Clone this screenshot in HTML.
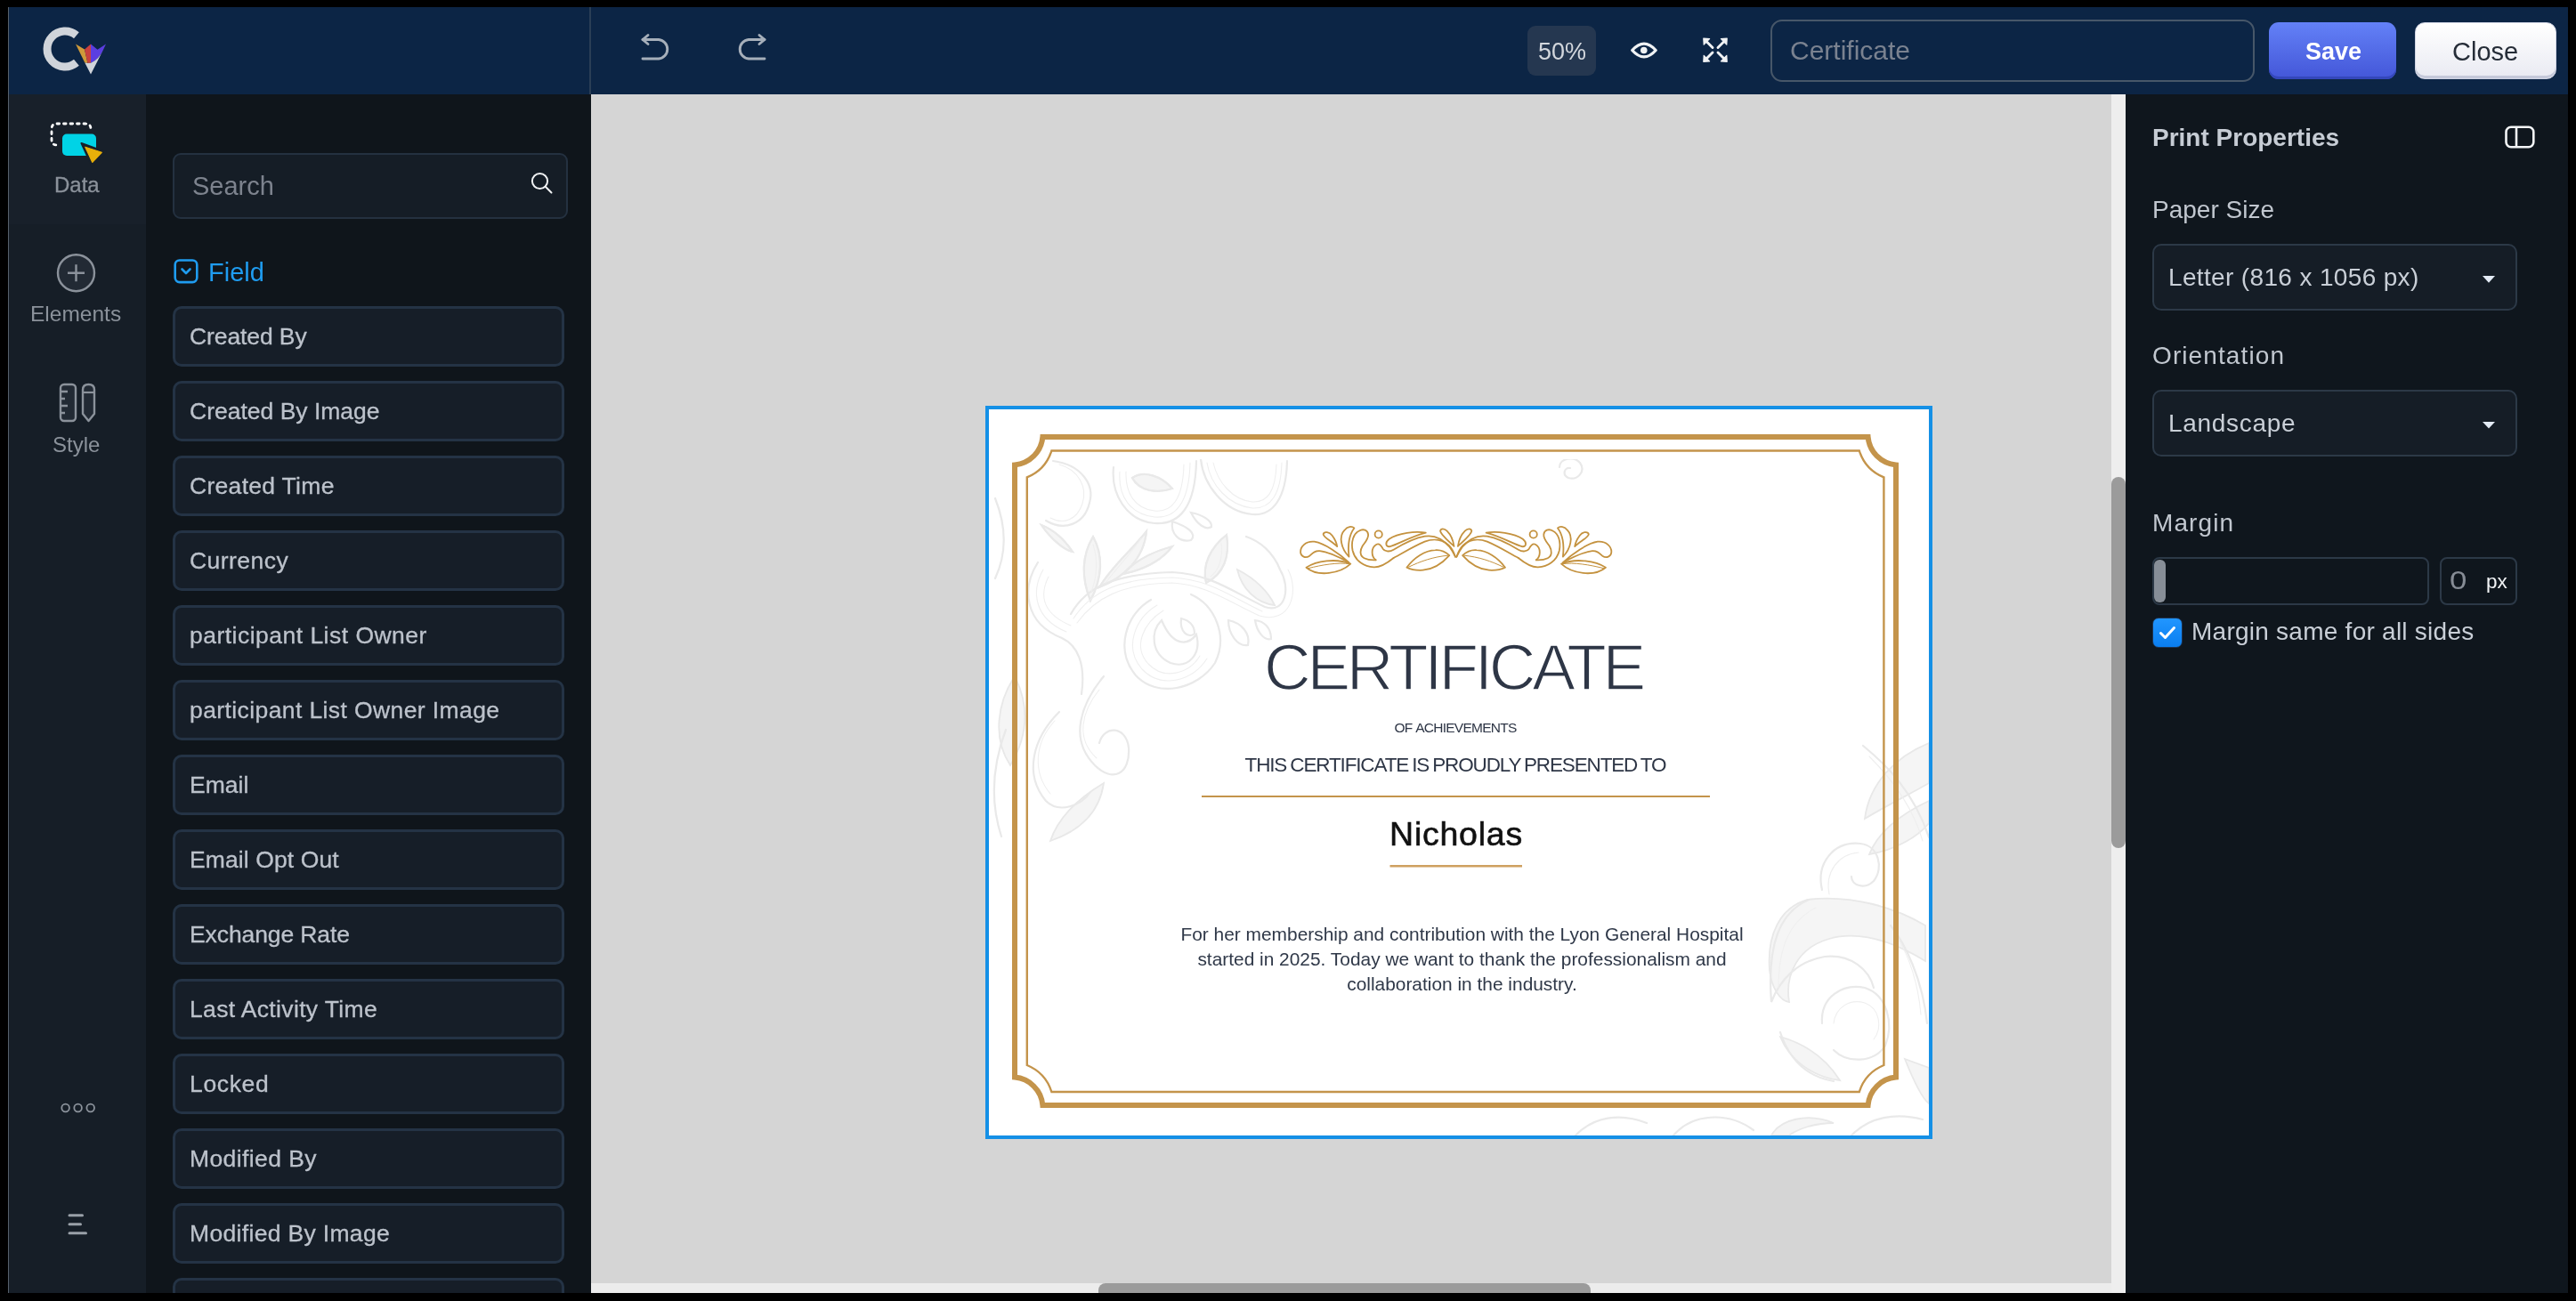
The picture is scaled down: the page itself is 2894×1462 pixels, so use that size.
<!DOCTYPE html>
<html><head><meta charset="utf-8">
<style>
*{box-sizing:border-box;margin:0;padding:0}
body{-webkit-font-smoothing:antialiased;will-change:transform}
html,body{width:2894px;height:1462px;overflow:hidden;background:#000;font-family:"Liberation Sans",sans-serif}
.a{position:absolute}
.t{position:absolute;white-space:nowrap;line-height:1}
#header{left:9px;top:8px;width:2876px;height:98px;background:#0c2545}
#leftline{left:9px;top:8px;width:1px;height:1445px;background:#56606b}
#rail{left:10px;top:106px;width:154px;height:1347px;background:#161e27}
#panel{left:164px;top:106px;width:500px;height:1347px;background:#0f151b}
#canvas{left:664px;top:106px;width:1708px;height:1336px;background:#d5d5d5}
#vtrack{left:2372px;top:106px;width:16px;height:1347px;background:#eeeeee}
#vthumb{left:2372px;top:536px;width:16px;height:417px;background:#9b9b9b;border-radius:8px}
#htrack{left:664px;top:1442px;width:1708px;height:11px;background:#ececec}
#hthumb{left:1234px;top:1442px;width:553px;height:11px;background:#9b9b9b;border-radius:8px 8px 0 0}
#rpanel{left:2388px;top:106px;width:497px;height:1347px;background:#0f161d}
.item{position:absolute;left:194px;width:440px;height:68px;background:#161e28;border:3px solid #243345;border-radius:10px}
.item span{position:absolute;left:16px;top:17.5px;font-size:26.5px;line-height:1;color:#bcc2cb;white-space:nowrap;-webkit-text-stroke:0.3px #bcc2cb}
</style></head><body>
<div class="a" id="header"></div>
<div class="a" id="leftline"></div>
<div class="a" id="rail"></div>
<div class="a" id="panel"></div>
<div class="a" id="canvas"></div>
<div class="a" id="vtrack"></div>
<div class="a" id="vthumb"></div>
<div class="a" id="htrack"></div>
<div class="a" id="hthumb"></div>
<div class="a" id="rpanel"></div>


<!-- rail -->
<div class="a" style="left:10px;top:106px;width:154px;height:146px;background:#18202a"></div>
<svg class="a" style="left:50px;top:130px" width="70" height="60" viewBox="50 130 70 60">
 <path d="M64 163 Q58 163 58 157 V145 Q58 139 64 139 H96 Q102 139 102 145 V146" fill="none" stroke="#ffffff" stroke-width="2.8" stroke-dasharray="2.6 4.9" stroke-dashoffset="-1" stroke-linecap="round"/>
 <rect x="70" y="150.5" width="38" height="24.5" rx="5" fill="#00d3e6"/>
 <path d="M91.5 161 L119 171 L103.5 187 Z" fill="#18202a" stroke="#18202a" stroke-width="2" stroke-linejoin="round"/>
 <path d="M95.8 165.2 L114.3 171.3 L103.8 182.4 Z" fill="#e8b00a" stroke="#e8b00a" stroke-width="1.2" stroke-linejoin="round"/>
</svg>
<div class="t" style="left:61px;top:196px;font-size:24px;color:#8b929b;-webkit-text-stroke:0.3px #8b929b">Data</div>
<svg class="a" style="left:55px;top:275px" width="62" height="62" viewBox="55 275 62 62">
 <circle cx="85.5" cy="306.7" r="20.5" fill="#222a34" stroke="#8b929b" stroke-width="2.4"/>
 <path d="M76 306.7 H95 M85.5 297.2 V316.2" stroke="#8b929b" stroke-width="2.4"/>
</svg>
<div class="t" style="left:34px;top:341px;font-size:24.5px;color:#8b929b">Elements</div>
<svg class="a" style="left:60px;top:425px" width="55" height="55" viewBox="60 425 55 55">
 <rect x="68" y="432" width="17" height="41" rx="4" fill="#222a34" stroke="#8b929b" stroke-width="2.4"/>
 <path d="M68 440 H76 M68 448 H73 M68 456 H76 M68 464 H73" stroke="#8b929b" stroke-width="2.4"/>
 <path d="M93 438 Q93 432 99.5 432 Q106 432 106 438 V465 L99.5 473 L93 465 Z" fill="#222a34" stroke="#8b929b" stroke-width="2.4" stroke-linejoin="round"/>
 <path d="M93 441 H106" stroke="#8b929b" stroke-width="2.2"/>
</svg>
<div class="t" style="left:59px;top:488px;font-size:24px;color:#8b929b">Style</div>
<svg class="a" style="left:60px;top:1232px" width="56" height="26" viewBox="60 1232 56 26">
 <g fill="none" stroke="#8b929b" stroke-width="1.8"><circle cx="73.6" cy="1245" r="4.3"/><circle cx="87.6" cy="1245" r="4.3"/><circle cx="101.7" cy="1245" r="4.3"/></g>
</svg>
<svg class="a" style="left:70px;top:1358px" width="36" height="36" viewBox="70 1358 36 36">
 <g stroke="#99a0a8" stroke-width="3" stroke-linecap="round"><path d="M78 1365.7 H92.5"/><path d="M78 1375.7 H90.5"/><path d="M78 1385.7 H96.5"/></g>
</svg>
<!-- panel -->
<div class="a" style="left:194px;top:172px;width:444px;height:74px;background:#151d26;border:2px solid #243140;border-radius:9px"></div>
<div class="t" style="left:216px;top:195px;font-size:29px;color:#7d838e">Search</div>
<svg class="a" style="left:592px;top:188px" width="34" height="34" viewBox="592 188 34 34">
 <circle cx="606.5" cy="203.5" r="8.6" fill="none" stroke="#f0f2f4" stroke-width="2"/>
 <path d="M612.8 209.8 L619.5 216.5" stroke="#f0f2f4" stroke-width="2" stroke-linecap="round"/>
</svg>
<svg class="a" style="left:190px;top:287px" width="38" height="36" viewBox="190 287 38 36">
 <rect x="196.7" y="292.5" width="24.6" height="24.6" rx="5" fill="none" stroke="#1f9cf0" stroke-width="2.6"/>
 <path d="M204.5 302.5 L209 307 L213.5 302.5" fill="none" stroke="#1f9cf0" stroke-width="2.6" stroke-linecap="round" stroke-linejoin="round"/>
</svg>
<div class="t" style="left:234px;top:292px;font-size:29px;color:#1f9cf0">Field</div>
<div class="item" style="top:344px"><span style="letter-spacing:-0.1px">Created By</span></div>
<div class="item" style="top:428px"><span style="letter-spacing:0px">Created By Image</span></div>
<div class="item" style="top:512px"><span style="letter-spacing:0.3px">Created Time</span></div>
<div class="item" style="top:596px"><span style="letter-spacing:0.45px">Currency</span></div>
<div class="item" style="top:680px"><span style="letter-spacing:0.48px">participant List Owner</span></div>
<div class="item" style="top:764px"><span style="letter-spacing:0.4px">participant List Owner Image</span></div>
<div class="item" style="top:848px"><span style="letter-spacing:0px">Email</span></div>
<div class="item" style="top:932px"><span style="letter-spacing:0.1px">Email Opt Out</span></div>
<div class="item" style="top:1016px"><span style="letter-spacing:-0.1px">Exchange Rate</span></div>
<div class="item" style="top:1100px"><span style="letter-spacing:0.35px">Last Activity Time</span></div>
<div class="item" style="top:1184px"><span style="letter-spacing:0.65px">Locked</span></div>
<div class="item" style="top:1268px"><span style="letter-spacing:0.4px">Modified By</span></div>
<div class="item" style="top:1352px"><span style="letter-spacing:0.33px">Modified By Image</span></div>
<div class="item" style="top:1436px"><span></span></div>


<!-- certificate page -->
<div class="a" style="left:1107px;top:456px;width:1064px;height:824px;border:4px solid #1590e6;background:#fff"></div>
<svg class="a" style="left:1111px;top:460px" width="1056" height="816" viewBox="1111 460 1056 816">
 <defs><clipPath id="fc"><rect x="1111" y="516" width="1056" height="760"/></clipPath></defs><g clip-path="url(#fc)"><g id="flourfill" fill="#f5f5f5" stroke="#e8e8e8" stroke-width="1.8">
<path d="M2167 835 C2130 850 2100 880 2095 920 C2120 905 2150 890 2167 880 Z"/>
<path d="M2167 900 C2135 915 2110 935 2100 960 C2130 955 2155 940 2167 925 Z"/>
<path d="M2030 1011 C2000 1020 1985 1050 1988 1090 C1990 1110 2000 1125 2010 1126 C2005 1095 2020 1065 2055 1055 C2090 1045 2130 1060 2163 1080 L2163 1040 C2130 1020 2080 1005 2030 1011 Z"/>
<path d="M2000 1165 C2010 1190 2035 1210 2067 1214 C2055 1195 2035 1175 2000 1165 Z"/>
<path d="M2140 1190 C2150 1215 2160 1235 2167 1240 L2167 1200 Z"/>
<path d="M1990 1276 C2000 1258 2030 1250 2060 1262 C2040 1262 2020 1268 2010 1276 Z"/>
<path d="M1228 603 C1240 625 1238 650 1225 675 C1215 650 1215 625 1228 603 Z"/>
<path d="M1288 597 C1270 620 1250 635 1235 660 C1260 650 1285 630 1288 597 Z"/>
<path d="M1317 614 C1295 620 1275 630 1262 645 C1285 640 1305 630 1317 614 Z"/>
<path d="M1378 601 C1382 625 1375 645 1355 655 C1350 635 1360 615 1378 601 Z"/>
<path d="M1272 537 C1285 528 1305 535 1317 549 C1300 555 1280 552 1272 537 Z"/>
<path d="M1170 590 C1180 605 1195 618 1205 620 C1195 605 1185 596 1170 590 Z"/>
<path d="M1140 760 C1120 790 1115 830 1135 860 C1150 835 1160 800 1140 760 Z"/>
<path d="M1240 880 C1215 895 1190 915 1180 945 C1210 935 1235 915 1240 880 Z"/>
<path d="M1390 640 C1410 650 1425 665 1432 680 C1412 678 1395 662 1390 640 Z"/>
</g>
<g id="flour" fill="none" stroke="#e9e9e9" stroke-linecap="round"><g stroke-width="2.2">
<path d="M1251 525 C1248 555 1265 585 1297 588 C1325 590 1343 570 1344 518"/>
<path d="M1272 537 C1285 528 1305 535 1317 549 C1300 555 1280 552 1272 537 Z"/>
<path d="M1317 586 C1315 600 1325 610 1338 607 C1345 600 1335 592 1317 586 Z"/>
<path d="M1338 576 C1345 590 1355 596 1361 592 C1362 585 1350 578 1338 576 Z"/>
<path d="M1349 516 C1352 545 1375 575 1407 578 C1430 580 1445 560 1446 518"/>
<path d="M1183 518 C1215 522 1230 545 1224 565 C1218 590 1195 597 1175 585"/>
<path d="M1170 590 C1180 605 1195 618 1205 620 C1195 605 1185 596 1170 590 Z"/>
<path d="M1203 690 C1220 660 1250 645 1317 643 C1360 645 1385 665 1421 682 C1445 690 1450 660 1438 640 C1430 620 1415 608 1400 603"/>
<path d="M1293 674 C1265 690 1252 730 1276 759 C1300 785 1345 775 1365 745 C1380 715 1365 680 1338 668"/>
<path d="M1305 697 C1292 710 1293 735 1315 745 C1335 752 1350 735 1344 713 C1335 725 1318 728 1305 697 Z"/>
<path d="M1228 603 C1240 625 1238 650 1225 675 C1215 650 1215 625 1228 603 Z"/>
<path d="M1288 597 C1270 620 1250 635 1235 660 C1260 650 1285 630 1288 597 Z"/>
<path d="M1317 614 C1295 620 1275 630 1262 645 C1285 640 1305 630 1317 614 Z"/>
<path d="M1378 601 C1382 625 1375 645 1355 655 C1350 635 1360 615 1378 601 Z"/>
<path d="M1327 695 C1325 710 1335 718 1342 712 C1342 702 1335 697 1327 695 Z"/>
<path d="M1380 697 C1380 712 1390 727 1402 725 C1405 712 1395 700 1380 697 Z"/>
<path d="M1410 697 C1412 710 1420 720 1428 718 C1428 705 1420 698 1410 697 Z"/>
<path d="M1166 632 C1148 660 1150 700 1193 717 C1210 725 1220 745 1215 780"/>
<path d="M1240 760 C1215 790 1200 830 1230 860 C1250 880 1270 870 1268 840 C1265 815 1240 815 1235 835"/>
<path d="M1190 800 C1160 830 1150 870 1175 900 C1190 915 1215 905 1225 890"/>
<path d="M1130 820 C1115 860 1112 900 1125 940"/>
<path d="M1118 560 C1130 590 1132 620 1118 650"/>
<path d="M2093 838 C2120 860 2150 890 2167 941"/>
<path d="M2047 1000 C2040 970 2060 945 2090 948 C2110 950 2117 975 2105 990 C2095 1000 2080 995 2080 985"/>
<path d="M2032 1011 C2000 1025 1985 1060 1990 1126 C2000 1100 2020 1080 2050 1075 C2080 1072 2100 1090 2105 1110"/>
<path d="M2047 1150 C2045 1120 2070 1105 2095 1110 C2120 1118 2128 1150 2118 1175 C2105 1195 2075 1195 2060 1180"/>
<path d="M2124 1040 C2140 1060 2160 1100 2165 1150"/>
<path d="M2000 1160 C2010 1190 2030 1210 2060 1215"/>
<path d="M1770 1276 C1790 1255 1820 1250 1850 1262"/>
<path d="M1880 1276 C1900 1252 1940 1248 1970 1270"/>
<path d="M2080 1276 C2100 1255 2130 1250 2160 1258"/>
<path d="M1752 525 C1752 515 1768 512 1775 520 C1782 530 1772 540 1762 537 C1755 534 1757 525 1764 526"/>
</g>
<g stroke-width="1.1" stroke="#efefef">
<path d="M1258 530 C1256 558 1270 578 1297 581 C1320 583 1336 566 1337 520"/>
<path d="M1265 530 C1264 555 1276 572 1297 574 C1316 576 1329 562 1330 522"/>
<path d="M1356 520 C1360 545 1380 568 1407 571 C1428 572 1439 555 1440 520"/>
<path d="M1363 520 C1368 542 1385 562 1407 564 C1424 565 1433 552 1434 522"/>
<path d="M1190 522 C1212 528 1222 548 1216 566 C1210 584 1195 590 1180 582"/>
<path d="M1210 700 C1230 672 1260 656 1317 655 C1355 657 1380 676 1415 692 C1450 702 1460 665 1447 640"/>
<path d="M1206 695 C1225 666 1255 650 1317 649 C1358 651 1382 670 1418 687"/>
<path d="M1300 680 C1275 695 1262 728 1283 752 C1305 775 1340 765 1356 740"/>
<path d="M1307 686 C1285 700 1272 726 1290 746 C1308 765 1336 757 1348 737"/>
<path d="M1172 640 C1158 665 1162 695 1198 710"/>
<path d="M1178 648 C1167 670 1172 690 1203 703"/>
<path d="M1228 612 C1234 630 1232 650 1226 665"/>
<path d="M1282 605 C1268 625 1255 638 1242 655"/>
<path d="M1372 610 C1374 628 1370 640 1360 648"/>
<path d="M1235 775 C1215 800 1208 830 1232 852"/>
<path d="M1185 810 C1162 835 1160 868 1180 892"/>
<path d="M2100 850 C2130 880 2150 910 2160 945"/>
<path d="M2040 1020 C2010 1035 1998 1065 1998 1110"/>
<path d="M2060 1150 C2062 1132 2078 1122 2095 1127 C2112 1133 2115 1155 2105 1168"/>
<path d="M2055 1005 C2050 980 2065 960 2088 958"/>
<path d="M2130 1050 C2145 1075 2155 1105 2158 1140"/>
</g>
</g></g>
 <path d="M1171.4 491 H2098.6 A34.5 34.5 0 0 0 2130 522.4 V1210.6 A34.5 34.5 0 0 0 2098.6 1242 H1171.4 A34.5 34.5 0 0 0 1140 1210.6 V522.4 A34.5 34.5 0 0 0 1171.4 491 Z" fill="none" stroke="#c4944b" stroke-width="6"/>
 <path d="M1181.4 506.5 H2088.8 A48 48 0 0 0 2116.4 536.4 V1197 A48 48 0 0 0 2088.8 1227 H1181.4 A48 48 0 0 0 1153.8 1197 V536.4 A48 48 0 0 0 1181.4 506.5 Z" fill="none" stroke="#c4944b" stroke-width="2.4"/>
 <rect x="1350" y="894" width="571" height="2" fill="#c4944b"/>
 <rect x="1561.5" y="972" width="148.5" height="2.5" fill="#cfa060"/>
</svg>
<!-- ornament -->
<svg class="a" style="left:1456px;top:586px" width="360" height="64" viewBox="-4.6 -4.7 360 64">
 <g id="ornhalf" fill="none" stroke="#c4923f" stroke-width="1.8" stroke-linecap="round" stroke-linejoin="round">
  <path d="M6.9 47 C18 40 40 36 56.7 43 C45 54 20 58 6.9 47 Z"/>
  <path d="M9 48 C25 44 42 41 56 43" stroke-width="1"/>
  <path d="M55 41.5 C45 32 28 20 16 18 C6 17 0 24 0.5 30 C1 35 6 37 10.6 34 C14 31 16 28 22 28.5 C32 29.5 45 36 55 41.5"/>
  <path d="M41.6 23.4 C36 18 26 13 26 9.5 C27 6 33 7 36 11 C39 15 41 19 41.6 23.4 Z"/>
  <path d="M54.9 34.9 C46 26 43 12 50 5 C53 1 58 0 60.8 2.8 C56 9 53 18 54.9 34.9 Z"/>
  <path d="M105 36.3 C98 42 90 47 82.9 46.7 C72 46 62 40 59 28 C57 18 60 9 66 6 C71 3 76 5 76.5 10 C77 15 72 20 70 23 C67 28 67 34 72 36.5 C76 38.5 81 38.8 85 38.6"/>
  <circle cx="88.1" cy="9.8" r="4.1"/>
  <path d="M85.1 38.6 C80 35 79 25 85.9 21 C89 19.5 91 22 93 26 C95 29 100 30 105 27 C115 21 128 14 140 12 C152 10 162 17 168 24 C171 28 173 32 174.4 35"/>
  <path d="M105 36.3 C115 31 128 23 140 18 C150 14 160 16 167 22 C171 26 173 31 174.4 35"/>
  <path d="M141.2 8 C130 6 110 8 100 15 C95 19 96 24 101 23.5 C110 21 125 12 141.2 8 Z"/>
  <path d="M119.8 47 C128 36 140 28 152 27.5 C158 27 164 30 167.7 33.4 C160 42 150 49 138 50 C130 50.5 124 49 119.8 47 Z"/>
  <path d="M122 46.5 C135 40 150 35 166 33.5" stroke-width="1"/>
  <path d="M172.9 23.1 C166 17 158 10 157.5 6 C158 3 162 3 165 6 C169 10 172 17 172.9 23.1 Z"/>
 </g>
 <use href="#ornhalf" transform="translate(350.2 0) scale(-1 1)"/>
</svg>
<div class="t" id="certtitle" style="left:1132.5px;top:712.5px;width:1000px;text-align:center;font-size:73px;color:#2e3646;letter-spacing:-4.25px;-webkit-text-stroke:1.6px #fff">CERTIFICATE</div>
<div class="t" id="ofach" style="left:1135px;top:810px;width:1000px;text-align:center;font-size:15.5px;color:#2e3646;letter-spacing:-0.75px;word-spacing:1px">OF ACHIEVEMENTS</div>
<div class="t" id="presented" style="left:1135px;top:849px;width:1000px;text-align:center;font-size:22.5px;color:#2e3646;letter-spacing:-1.15px;word-spacing:-1px">THIS CERTIFICATE IS PROUDLY PRESENTED TO</div>
<div class="t" id="nicholas" style="left:1136px;top:918.5px;width:1000px;text-align:center;font-size:37.5px;color:#111;-webkit-text-stroke:0.6px #111;letter-spacing:0.75px">Nicholas</div>
<div class="t" id="p1" style="left:1142.5px;top:1040px;width:1000px;text-align:center;font-size:20.9px;color:#2f3848">For her membership and contribution with the Lyon General Hospital</div>
<div class="t" id="p2" style="left:1142.5px;top:1068px;width:1000px;text-align:center;font-size:20.9px;color:#2f3848">started in 2025. Today we want to thank the professionalism and</div>
<div class="t" id="p3" style="left:1142.5px;top:1096px;width:1000px;text-align:center;font-size:20.9px;color:#2f3848">collaboration in the industry.</div>


<!-- right panel -->
<div class="t" style="left:2418px;top:141px;font-size:28px;font-weight:700;color:#c6ccd4">Print Properties</div>
<svg class="a" style="left:2810px;top:137px" width="42" height="34" viewBox="2810 137 42 34">
 <rect x="2815.5" y="142.8" width="30.8" height="22.4" rx="5.5" fill="none" stroke="#f2f4f6" stroke-width="2.6"/>
 <path d="M2827 143 V165" stroke="#f2f4f6" stroke-width="2.6"/>
</svg>
<div class="t" style="left:2418px;top:222px;font-size:28px;color:#c1c7cf">Paper Size</div>
<div class="a" style="left:2418px;top:274px;width:410px;height:75px;background:#151d26;border:2px solid #2c3947;border-radius:10px"></div>
<div class="t" style="left:2436px;top:298px;font-size:28px;color:#c9cfd7;letter-spacing:0.35px">Letter (816 x 1056 px)</div>
<svg class="a" style="left:2785px;top:306px" width="22" height="16" viewBox="2785 306 22 16"><polygon points="2789,310 2803,310 2796,317.7" fill="#e3ebf5"/></svg>
<div class="t" style="left:2418px;top:386px;font-size:28px;color:#c1c7cf;letter-spacing:1.1px">Orientation</div>
<div class="a" style="left:2418px;top:438px;width:410px;height:75px;background:#151d26;border:2px solid #2c3947;border-radius:10px"></div>
<div class="t" style="left:2436px;top:462px;font-size:28px;color:#c9cfd7;letter-spacing:0.7px">Landscape</div>
<svg class="a" style="left:2785px;top:470px" width="22" height="16" viewBox="2785 470 22 16"><polygon points="2789,474 2803,474 2796,481.5" fill="#e3ebf5"/></svg>
<div class="t" style="left:2418px;top:574px;font-size:28px;color:#c1c7cf;letter-spacing:1.1px">Margin</div>
<div class="a" style="left:2418px;top:626px;width:311px;height:54px;border:2px solid #2c3947;border-radius:8px"></div>
<div class="a" style="left:2420px;top:629px;width:12.5px;height:48px;background:#878e97;border-radius:6px"></div>
<div class="a" style="left:2741px;top:626px;width:87px;height:54px;border:2px solid #2c3947;border-radius:8px"></div>
<div class="t" style="left:2752px;top:636.5px;font-size:29.5px;color:#868c95;transform:scaleX(1.18);transform-origin:0 0">0</div>
<div class="t" style="left:2793px;top:643px;font-size:22.5px;color:#f2f4f6">px</div>
<div class="a" style="left:2418px;top:694px;width:34px;height:34px;border-radius:7px;background:linear-gradient(#2196ff,#0a7ef0);border:1.5px solid #1d3350"></div>
<svg class="a" style="left:2418px;top:694px" width="34" height="34" viewBox="0 0 34 34"><path d="M9.5 17.5 L14.5 22.5 L24.5 11.5" fill="none" stroke="#fff" stroke-width="3" stroke-linecap="round" stroke-linejoin="round"/></svg>
<div class="t" style="left:2462px;top:696px;font-size:28px;color:#c9cfd7;letter-spacing:0.25px">Margin same for all sides</div>

<!-- logo -->
<svg class="a" style="left:40px;top:25px" width="90" height="65" viewBox="40 25 90 65">
 <path d="M85.9 39.7 A20 20 0 1 0 85.9 70.3" fill="none" stroke="#d0d4da" stroke-width="9"/>
 <polygon points="85,49.5 95,55.5 98.5,71 95.3,70.5" fill="#cf9a3a"/>
 <polygon points="95,55.5 102,49.5 102,70.8 98.5,71" fill="#c9413f"/>
 <path d="M102 49.5 L109.5 55.8 L119 49.5 L116 56 Q111 67 102 70.8 Z" fill="#5b3ee0"/>
 <path d="M95.3 70.5 L98.5 71 L102 70.8 Q111 67 116 56 L102 83.5 Z" fill="#d0d4da"/>
</svg>
<div class="a" style="left:662px;top:8px;width:2px;height:98px;background:#2a3e56"></div>
<!-- undo/redo -->
<svg class="a" style="left:715px;top:35px" width="45" height="36" viewBox="715 35 45 36">
 <path d="M722 44.5 H740 A10.8 10.8 0 0 1 740 66 H722" fill="none" stroke="#a6afba" stroke-width="2.9" stroke-linecap="round"/>
 <path d="M728 39.5 L722 44.5 L728 49.5" fill="none" stroke="#a6afba" stroke-width="2.9" stroke-linecap="round" stroke-linejoin="round"/>
</svg>
<svg class="a" style="left:824px;top:35px" width="45" height="36" viewBox="824 35 45 36">
 <path d="M859 44.5 H841 A10.8 10.8 0 0 0 841 66 H859" fill="none" stroke="#a6afba" stroke-width="2.9" stroke-linecap="round"/>
 <path d="M853 39.5 L859 44.5 L853 49.5" fill="none" stroke="#a6afba" stroke-width="2.9" stroke-linecap="round" stroke-linejoin="round"/>
</svg>
<!-- zoom -->
<div class="a" style="left:1716px;top:29px;width:77px;height:56px;background:#253750;border-radius:9px"></div>
<div class="t" id="zoomtxt" style="left:1728px;top:45px;font-size:27px;color:#d3d7dd">50%</div>
<!-- eye -->
<svg class="a" style="left:1828px;top:42px" width="38" height="30" viewBox="1828 42 38 30">
 <path d="M1833.7 56.5 Q1847 41.7 1860.2 56.5 Q1847 71.3 1833.7 56.5 Z" fill="none" stroke="#f0f2f4" stroke-width="3.3" stroke-linejoin="round"/>
 <circle cx="1846.8" cy="56.5" r="3.8" fill="#f0f2f4"/>
</svg>
<!-- fullscreen -->
<svg class="a" style="left:1908px;top:38px" width="38" height="36" viewBox="1908 38 38 36">
 <g stroke="#f0f2f4" stroke-width="2.9" fill="none" stroke-linecap="round">
  <path d="M1917 46.5 L1924 53.5"/><path d="M1937 46.5 L1930 53.5"/><path d="M1917 66 L1924 59"/><path d="M1937 66 L1930 59"/>
 </g>
 <g fill="#f0f2f4" stroke="#f0f2f4" stroke-width="1.2" stroke-linejoin="round">
  <polygon points="1913.8,43.2 1920.6,43.6 1914.2,50.2"/>
  <polygon points="1940.2,43.2 1933.4,43.6 1939.8,50.2"/>
  <polygon points="1913.8,69.3 1920.6,68.9 1914.2,62.3"/>
  <polygon points="1940.2,69.3 1933.4,68.9 1939.8,62.3"/>
 </g>
</svg>
<!-- title input -->
<div class="a" style="left:1989px;top:22px;width:544px;height:70px;border:2px solid #475769;border-radius:13px"></div>
<div class="t" id="titletxt" style="left:2011px;top:42px;font-size:30px;color:#7a8290">Certificate</div>
<!-- save -->
<div class="a" style="left:2549px;top:25px;width:143px;height:64px;border-radius:11px;background:linear-gradient(#6381f7,#4356d8);box-shadow:inset 0 -3px 0 #3447bb"></div>
<div class="t" id="savetxt" style="left:2590px;top:45px;font-size:27px;font-weight:700;color:#fff">Save</div>
<!-- close -->
<div class="a" style="left:2713px;top:25px;width:159px;height:64px;border-radius:11px;background:linear-gradient(#ffffff,#e9eaf2);border:1.5px solid #d0d4e4;box-shadow:inset 0 -3px 0 #c5c9da"></div>
<div class="t" id="closetxt" style="left:2755px;top:44px;font-size:29px;color:#262d38">Close</div>

<div class="a" style="left:0;top:1453px;width:2894px;height:9px;background:#000"></div>
</body></html>
